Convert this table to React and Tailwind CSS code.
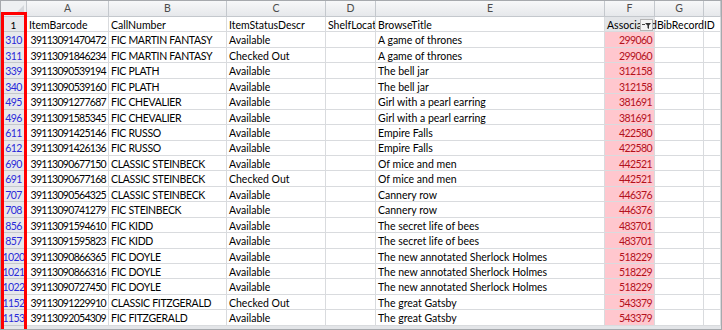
import React from 'react';

const rows = [
  ['310', '39113091470472', 'FIC MARTIN FANTASY', 'Available', 'A game of thrones', '299060'],
  ['311', '39113091846234', 'FIC MARTIN FANTASY', 'Checked Out', 'A game of thrones', '299060'],
  ['339', '39113090539194', 'FIC PLATH', 'Available', 'The bell jar', '312158'],
  ['340', '39113090539160', 'FIC PLATH', 'Available', 'The bell jar', '312158'],
  ['495', '39113091277687', 'FIC CHEVALIER', 'Available', 'Girl with a pearl earring', '381691'],
  ['496', '39113091585345', 'FIC CHEVALIER', 'Available', 'Girl with a pearl earring', '381691'],
  ['611', '39113091425146', 'FIC RUSSO', 'Available', 'Empire Falls', '422580'],
  ['612', '39113091426136', 'FIC RUSSO', 'Available', 'Empire Falls', '422580'],
  ['690', '39113090677150', 'CLASSIC STEINBECK', 'Available', 'Of mice and men', '442521'],
  ['691', '39113090677168', 'CLASSIC STEINBECK', 'Checked Out', 'Of mice and men', '442521'],
  ['707', '39113090564325', 'CLASSIC STEINBECK', 'Available', 'Cannery row', '446376'],
  ['708', '39113090741279', 'FIC STEINBECK', 'Available', 'Cannery row', '446376'],
  ['856', '39113091594610', 'FIC KIDD', 'Available', 'The secret life of bees', '483701'],
  ['857', '39113091595823', 'FIC KIDD', 'Available', 'The secret life of bees', '483701'],
  ['1020', '39113090866365', 'FIC DOYLE', 'Available', 'The new annotated Sherlock Holmes', '518229'],
  ['1021', '39113090866316', 'FIC DOYLE', 'Available', 'The new annotated Sherlock Holmes', '518229'],
  ['1022', '39113090727450', 'FIC DOYLE', 'Available', 'The new annotated Sherlock Holmes', '518229'],
  ['1152', '39113091229910', 'CLASSIC FITZGERALD', 'Checked Out', 'The great Gatsby', '543379'],
  ['1153', '39113092054309', 'FIC FITZGERALD', 'Available', 'The great Gatsby', '543379'],
];

const letters = ['A', 'B', 'C', 'D', 'E', 'F', 'G', ''];

// plain white cell with excel gridlines
const cell = 'border-r border-b border-[#d9dbde] bg-white whitespace-nowrap overflow-hidden px-[2px] pt-[2px] flex items-center';
const colHead = 'border-r border-b border-[#c4c8cd] bg-gradient-to-b from-[#f7f8f9] to-[#e6e8eb] text-[#4c4c4c] flex items-center justify-center';
const rowHead = 'border-r border-b border-[#c4c8cd] bg-[#e6e8ec] pt-[2px] flex items-center justify-center whitespace-nowrap overflow-hidden';

const FilterButton = () => (
  <div className="absolute right-[1px] top-[2px] w-[13px] h-[12px] bg-[#f4f4f4] border border-[#b5b5b5] flex items-center justify-center">
    <svg width="11" height="9" viewBox="0 0 11 9">
      <path d="M1 3.5h3" stroke="#444" strokeWidth="1" />
      <path d="M4 2h6L8 4.5V8L6.5 7V4.5z" fill="#333" />
    </svg>
  </div>
);

export default function App() {
  return (
    <div className="w-[722px] h-[330px] overflow-hidden bg-[#e3e5e8] border border-[#a6a9ad] relative" style={{ fontFamily: 'Lato, "Open Sans", sans-serif' }}>
      <div className="grid grid-cols-[26px_82px_118px_99px_50px_229px_50px_49px_17px] grid-rows-[16px_repeat(20,15.45px)] text-[10.5px] leading-none text-black">
        {/* corner */}
        <div className="border-r border-b border-[#c4c8cd] bg-[#eef0f2] relative overflow-hidden">
          <div className="absolute right-[2px] bottom-[2px] w-0 h-0 border-l-[9px] border-l-transparent border-b-[9px] border-b-[#d4d7db]" />
        </div>
        {letters.map((l, i) => (
          <div key={i} className={colHead}>{l}</div>
        ))}

        {/* header row 1 */}
        <div className={rowHead + ' text-black text-[10px]'}>1</div>
        <div className={cell}>ItemBarcode</div>
        <div className={cell}>CallNumber</div>
        <div className={cell}>ItemStatusDescr</div>
        <div className={cell}>ShelfLocationDescr</div>
        <div className={cell}>BrowseTitle</div>
        <div className="border-r border-b border-[#d9dbde] whitespace-nowrap px-[2px] pt-[2px] flex items-center relative z-10">
          AssociatedBibRecordID
          <FilterButton />
        </div>
        <div className="border-r border-b border-[#d9dbde] bg-white" />
        <div className={cell} />

        {rows.map((r) => (
          <React.Fragment key={r[0]}>
            <div className={rowHead + ' text-[#2b2bd9] text-[10.5px] tracking-[-0.6px]'}>{r[0]}</div>
            <div className={cell + ' justify-end tracking-[-0.7px]'}>{r[1]}</div>
            <div className={cell + ' tracking-[-0.3px]'}>{r[2]}</div>
            <div className={cell}>{r[3]}</div>
            <div className={cell} />
            <div className={cell}>{r[4]}</div>
            <div className="border-r border-b border-[#d9dbde] bg-[#ffc7ce] text-[#b3111c] tracking-[-0.6px] pt-[2px] flex items-center justify-end pr-[2px]">{r[5]}</div>
            <div className={cell} />
            <div className={cell} />
          </React.Fragment>
        ))}
      </div>

      {/* red highlight around the row numbers */}
      <div className="absolute left-0 top-[11px] w-[26px] h-[330px] border-[3px] border-[#ff0000]" />
    </div>
  );
}
